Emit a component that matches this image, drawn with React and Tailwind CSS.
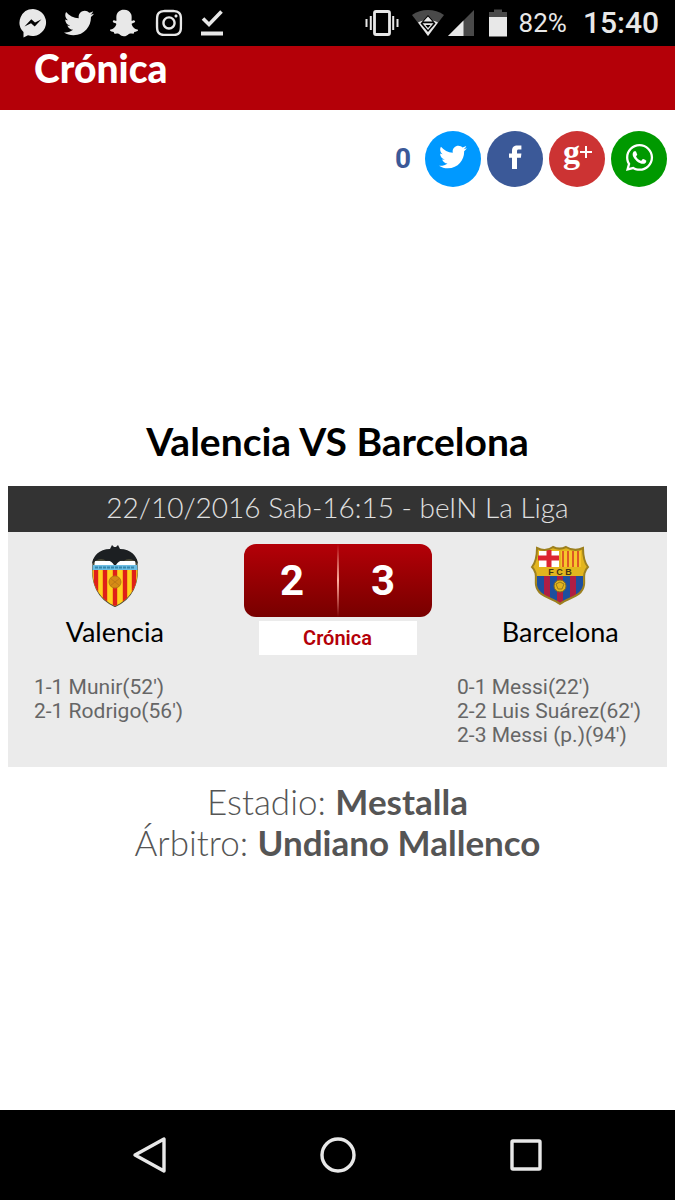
import React from 'react';
import { FaTwitter, FaSnapchatGhost, FaInstagram, FaWhatsapp } from 'react-icons/fa';

const match = {
  date: '22/10/2016 Sab-16:15 - beIN La Liga',
  stadium: 'Mestalla',
  referee: 'Undiano Mallenco',
  home: { name: 'Valencia', score: 2, goals: ["1-1 Munir(52')", "2-1 Rodrigo(56')"] },
  away: { name: 'Barcelona', score: 3, goals: ["0-1 Messi(22')", "2-2 Luis Suárez(62')", "2-3 Messi (p.)(94')"] },
};

function MessengerIcon() {
  return (
    <svg width="30" height="30" viewBox="0 0 30 30" aria-hidden="true">
      <path d="M15 1A13.5 13.5 0 1 1 10 27.2L5.5 29.5V24A13.5 13.5 0 0 1 15 1Z" fill="currentColor" />
      <path d="M6.5 18.5L13.3 11.2L17 14.6L23.5 11.2L16.7 18.6L13 15.2Z" fill="#000" />
    </svg>
  );
}

function DoneIcon() {
  return (
    <svg width="24" height="28" viewBox="0 0 24 28" fill="none" aria-hidden="true">
      <path d="M3 9.5L9 15.5L21.5 2.5" stroke="currentColor" strokeWidth="3.6" />
      <path d="M1 24.5H23" stroke="currentColor" strokeWidth="4" />
    </svg>
  );
}

function VibrateIcon() {
  return (
    <svg width="34" height="28" viewBox="0 0 34 28" fill="none" stroke="currentColor" aria-hidden="true">
      <rect x="9.5" y="2.5" width="15" height="23" rx="1.5" strokeWidth="2.8" />
      <path d="M5.8 7V21M28.2 7V21" strokeWidth="2" />
      <path d="M1.5 10V18M32.5 10V18" strokeWidth="2" />
    </svg>
  );
}

function WifiIcon() {
  return (
    <svg width="34" height="28" viewBox="0 0 34 28" aria-hidden="true">
      <path d="M1 6C10 -0.8 24 -0.8 33 6L17 27Z" fill="#4a4a4a" />
      <path d="M7 13.5C12 10.5 22 10.5 27 13.5L17 27Z" fill="#e8e8e8" />
      <path d="M17 6L24.5 14.5L17 23L9.5 14.5Z" fill="#000" />
      <path d="M17 7.5L21.5 12.6H12.5Z" fill="#e8e8e8" />
      <path d="M11.5 14.2H22.5L17 21Z" fill="#e8e8e8" />
      <path d="M14.5 16H19.5L17 19Z" fill="#000" />
    </svg>
  );
}

function SignalIcon() {
  return (
    <svg width="28" height="28" viewBox="0 0 28 28" aria-hidden="true">
      <path d="M1 27L27 1V27Z" fill="#4a4a4a" />
      <path d="M1 27L16.5 11.5V27Z" fill="#e8e8e8" />
    </svg>
  );
}

function BatteryIcon() {
  return (
    <svg width="18" height="28" viewBox="0 0 18 28" aria-hidden="true">
      <path d="M5 0.5H13V3H18V8H0V3H5Z" fill="#4a4a4a" />
      <path d="M0 8H18V27.5H0Z" fill="#e8e8e8" />
    </svg>
  );
}

function FacebookIcon() {
  return (
    <svg width="13" height="24" viewBox="0 0 13 24" fill="currentColor" aria-hidden="true">
      <path d="M3 24V12.8H0V8.6H3V6C3 2 5 0.4 8.4 0.4H12.4V4.6H9.8C8.4 4.6 8 5.2 8 6.4V8.6H12.4L11.9 12.8H8V24Z" />
    </svg>
  );
}

function GooglePlusIcon() {
  return (
    <svg width="32" height="48" viewBox="0 0 32 48" fill="currentColor" aria-hidden="true">
      <text x="2" y="30" fontFamily="Liberation Serif, serif" fontWeight="bold" fontSize="34">g</text>
      <path d="M19 19H31M25 13V25" stroke="currentColor" strokeWidth="2" />
    </svg>
  );
}

function ValenciaCrest() {
  return (
    <svg width="50" height="64" viewBox="0 0 50 64" role="img" aria-label="Escudo Valencia">
      <defs>
        <clipPath id="vcf">
          <path d="M3 20C0 40 9 55 25 62C41 55 50 40 47 20Z" />
        </clipPath>
      </defs>
      <path d="M4 16C0 40 9 55 25 62C41 55 50 40 46 16Z" fill="#fff" stroke="#4b4a36" strokeWidth="2" />
      <g clipPath="url(#vcf)">
        <rect y="26" width="50" height="38" fill="#ffd21f" />
        <path d="M6 26V64M15 26V64M25 26V64M35 26V64M44 26V64" stroke="#df2019" strokeWidth="4.4" />
        <rect y="21" width="50" height="5" fill="#6dbde3" />
        <path d="M5 23.5H45" stroke="#3387ad" strokeWidth="2" strokeDasharray="3 1" />
      </g>
      <circle cx="25" cy="38" r="6" fill="#d58b16" stroke="#b87714" />
      <path d="M20 34L30 42M30 34L20 42" stroke="#bd7915" />
      <path
        d="M2 20C3 12 9 5 20 5L22 1L24 3H26L28 1L30 5C41 5 47 12 48 20C43 14 37 14 34 17C30 16 28 18 26 21H24C22 18 20 16 16 17C13 14 7 14 2 20Z"
        fill="#1c1f22"
      />
    </svg>
  );
}

function BarcelonaCrest() {
  return (
    <svg width="60" height="64" viewBox="0 0 60 64" role="img" aria-label="Escudo Barcelona">
      <defs>
        <clipPath id="fcb">
          <path d="M7 4C13 7 19 6 23 3C27 5 32 5 36 3C41 6 47 7 53 4C53 11 54 18 58 23C52 29 55 35 54 41C52 53 39 53 30 60C21 53 8 53 6 41C5 35 8 29 2 23C6 18 7 11 7 4Z" />
        </clipPath>
      </defs>
      <g clipPath="url(#fcb)">
        <rect width="60" height="64" fill="#e2b51e" />
        <rect x="9" y="7" width="20" height="16" fill="#fff" />
        <path d="M19 6V23M8 14H29" stroke="#dc2431" strokeWidth="5" />
        <rect x="31" y="7" width="20" height="16" fill="#f7c62b" />
        <path d="M33 7V23M38 7V23M43 7V23M48 7V23" stroke="#dc5a24" strokeWidth="2" />
        <rect x="7" y="32" width="46" height="30" fill="#1d4f9f" />
        <path d="M17 32V62M30 32V62M43 32V62" stroke="#ae1e45" strokeWidth="6" />
      </g>
      <path
        d="M7 4C13 7 19 6 23 3C27 5 32 5 36 3C41 6 47 7 53 4C53 11 54 18 58 23C52 29 55 35 54 41C52 53 39 53 30 60C21 53 8 53 6 41C5 35 8 29 2 23C6 18 7 11 7 4Z"
        fill="none" stroke="#9d801f" strokeWidth="2"
      />
      <text x="30" y="31" textAnchor="middle" fontFamily="Liberation Sans, sans-serif" fontWeight="bold" fontSize="9" fill="#3e3515">F C B</text>
      <circle cx="30" cy="42" r="6" fill="#e2b51e" stroke="#7f6b20" />
      <path d="M26 40L30 38L34 40L32 45H28Z" fill="none" stroke="#957b1d" />
    </svg>
  );
}

function StatusBar() {
  return (
    <div className="flex items-center justify-between h-[46px] pl-[18px] pr-4 bg-black text-[#e8e8e8]">
      <div className="flex items-center gap-4">
        <MessengerIcon />
        <FaTwitter size={30} />
        <FaSnapchatGhost size={28} />
        <FaInstagram size={30} />
        <DoneIcon />
      </div>
      <div className="flex items-center gap-3">
        <VibrateIcon />
        <div className="flex items-center gap-[2px] pr-[2px]">
          <WifiIcon />
          <SignalIcon />
        </div>
        <BatteryIcon />
        <span className="text-[26px] leading-8">82%</span>
        <span className="pl-1 text-[30px] leading-8 font-medium">15:40</span>
      </div>
    </div>
  );
}

function ShareBar() {
  return (
    <div className="flex items-center justify-end gap-[6px] text-white">
      <span className="mr-2 text-[28px] leading-8 font-bold text-[#3b5998]">0</span>
      <a href="#twitter" aria-label="Twitter" className="flex items-center justify-center size-14 pb-1 rounded-full bg-[#0099ff]">
        <FaTwitter size={28} />
      </a>
      <a href="#facebook" aria-label="Facebook" className="flex items-center justify-center size-14 pb-1 rounded-full bg-[#3b5998]">
        <FacebookIcon />
      </a>
      <a href="#google" aria-label="Google+" className="flex items-center justify-center size-14 pb-1 rounded-full bg-[#cc3333]">
        <GooglePlusIcon />
      </a>
      <a href="#whatsapp" aria-label="WhatsApp" className="flex items-center justify-center size-14 pb-1 rounded-full bg-[#009900]">
        <FaWhatsapp size={31} />
      </a>
    </div>
  );
}

function Team({ name, children }) {
  return (
    <div className="flex flex-col items-center">
      {children}
      <p className="mt-2 font-['Lato',sans-serif] text-[27px] leading-8 text-black">{name}</p>
    </div>
  );
}

function Goals({ goals }) {
  return (
    <ul className="text-[21px] leading-6 text-[#666666]">
      {goals.map((goal) => (
        <li key={goal}>{goal}</li>
      ))}
    </ul>
  );
}

function App() {
  const { home, away } = match;

  return (
    <div className="flex flex-col min-h-screen bg-white font-['Roboto',sans-serif]">
      <StatusBar />

      <header className="h-16 px-[34px] bg-[#b40008]">
        <h1 className="font-['Lato',sans-serif] text-[39px] leading-11 font-black text-white">Crónica</h1>
      </header>

      <main className="flex-1 px-2 pt-[21px]">
        <ShareBar />

        {/* Match card, below the banner slot */}
        <section className="mt-[230px]">
          <h2 className="text-center font-['Lato',sans-serif] text-[39px] leading-12 font-bold text-black">
            {home.name} VS {away.name}
          </h2>
          <p className="mt-[21px] h-[46px] bg-[#333333] text-center font-['Lato',sans-serif] text-[28px] leading-[42px] font-light text-[#e0e0e0]">
            {match.date}
          </p>
          <div className="pt-3 pb-5 bg-[#ebebeb]">
            <div className="grid grid-cols-[1fr_232px_1fr]">
              <Team name={home.name}><ValenciaCrest /></Team>
              <div className="flex flex-col items-center">
                <div className="flex items-center w-[188px] h-[73px] rounded-xl bg-linear-to-b from-[#b40008] to-[#780000] text-[42px] font-bold text-white text-center">
                  <span className="flex-1 pl-1">{home.score}</span>
                  <span className="w-[2px] h-full bg-linear-to-b from-transparent via-[#ffb0a0] to-transparent" />
                  <span className="flex-1 pr-1">{away.score}</span>
                </div>
                <a href="#cronica" className="mt-1 w-[158px] bg-white text-center text-[20px] leading-[34px] font-semibold text-[#b40008]">Crónica</a>
              </div>
              <Team name={away.name}><BarcelonaCrest /></Team>
            </div>
            <div className="flex justify-between mt-5 px-[26px]">
              <Goals goals={home.goals} />
              <Goals goals={away.goals} />
            </div>
          </div>
        </section>

        <div className="mt-[14px] text-center font-['Lato',sans-serif] text-[35px] leading-[41px] font-light text-[#555555]">
          <p>Estadio: <strong className="font-bold">{match.stadium}</strong></p>
          <p>Árbitro: <strong className="font-bold">{match.referee}</strong></p>
        </div>
      </main>

      <nav className="flex items-center justify-center gap-[150px] h-[90px] bg-black text-[#e8e8e8]">
        <button type="button" aria-label="Atrás">
          <svg width="38" height="38" viewBox="0 0 38 38" fill="none" stroke="currentColor" strokeWidth="3.4" strokeLinejoin="round">
            <path d="M33 3V35L4 19Z" />
          </svg>
        </button>
        <button type="button" aria-label="Inicio">
          <svg width="38" height="38" viewBox="0 0 38 38" fill="none" stroke="currentColor" strokeWidth="3.4">
            <circle cx="19" cy="19" r="16" />
          </svg>
        </button>
        <button type="button" aria-label="Recientes">
          <svg width="38" height="38" viewBox="0 0 38 38" fill="none" stroke="currentColor" strokeWidth="3.4">
            <rect x="5" y="5" width="28" height="28" rx="1" />
          </svg>
        </button>
      </nav>
    </div>
  );
}

export default App;
